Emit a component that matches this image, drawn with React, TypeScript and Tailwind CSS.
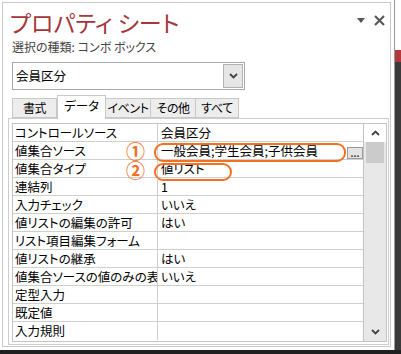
import type { ReactNode } from 'react';

const JP = "font-['Noto_Sans_CJK_JP','Noto_Sans',sans-serif] [font-feature-settings:'palt']";

type Row = { label: string; value: string; extra?: ReactNode };

const rows: Row[] = [
  { label: 'コントロールソース', value: '会員区分' },
  {
    label: '値集合ソース',
    value: '一般会員;学生会員;子供会員',
    extra: (
      <>
        <span className="absolute left-[113px] top-[0px] text-[19px] font-bold leading-[18px] text-[#f36f21]">①</span>
        <span className="pointer-events-none absolute left-[141px] top-[1px] h-[19px] w-[192px] rounded-[9px] border-2 border-[#f36f21]" />
        <span className="absolute left-[334px] top-[5px] flex h-[12px] w-[16px] items-center justify-center border border-[#9a9a9a] bg-[#e4e4e4] text-[9px] font-bold leading-none text-[#333]">
          ...
        </span>
      </>
    ),
  },
  {
    label: '値集合タイプ',
    value: '値リスト',
    extra: (
      <>
        <span className="absolute left-[113px] top-[1px] text-[19px] font-bold leading-[18px] text-[#f36f21]">②</span>
        <span className="pointer-events-none absolute left-[141px] top-[3px] h-[18px] w-[78px] rounded-[9px] border-2 border-[#f36f21]" />
      </>
    ),
  },
  { label: '連結列', value: '1' },
  { label: '入力チェック', value: 'いいえ' },
  { label: '値リストの編集の許可', value: 'はい' },
  { label: 'リスト項目編集フォーム', value: '' },
  { label: '値リストの継承', value: 'はい' },
  { label: '値集合ソースの値のみの表示', value: 'いいえ' },
  { label: '定型入力', value: '' },
  { label: '既定値', value: '' },
  { label: '入力規則', value: '' },
];

const tabs = [
  { name: '書式', w: 'w-[45px]' },
  { name: 'データ', w: 'w-[49px]', active: true },
  { name: 'イベント', w: 'w-[46px]' },
  { name: 'その他', w: 'w-[46px]' },
  { name: 'すべて', w: 'w-[44px]' },
];

function Chevron({ up = false }: { up?: boolean }) {
  return (
    <svg width="9" height="6" viewBox="0 0 9 6" className={up ? 'rotate-180' : ''}>
      <path d="M1 1l3.5 3.5L8 1" fill="none" stroke="#444" strokeWidth="1.8" />
    </svg>
  );
}

export default function App() {
  return (
    <div className={`flex h-[354px] w-[401px] flex-col overflow-hidden bg-[#202020] ${JP}`}>
      <div className="flex h-[350px]">
        {/* panel */}
        <div className="w-[394px] bg-white pl-[2px] pt-[2px]">
          <div className="relative h-[345px] w-[389px] border border-[#c9c9c9]">
            {/* header */}
            <div className="flex h-[32px] items-end justify-between pl-[7px] pr-[5px]">
              <div className="text-[23px] leading-[26px] text-[#a4373a]">プロパティ シート</div>
              <div className="mb-[9px] flex items-center gap-[9px]">
                <svg width="8" height="5" viewBox="0 0 8 5">
                  <path d="M0 0h8L4 5z" fill="#555" />
                </svg>
                <svg width="11" height="11" viewBox="0 0 11 11">
                  <path d="M1 1l9 9M10 1l-9 9" stroke="#555" strokeWidth="2" />
                </svg>
              </div>
            </div>
            <div className="mt-[4px] h-[16px] pl-[9px] text-[12px] leading-[16px] text-[#444]">
              選択の種類: コンボ ボックス
            </div>

            {/* combo */}
            <div className="ml-[9px] mt-[7px] flex h-[28px] w-[233px] items-center border border-[#a9a9a9] bg-white pl-[3px] pr-[1px]">
              <span className="flex-1 text-[12.5px] leading-none text-black">会員区分</span>
              <span className="flex h-[24px] w-[20px] items-center justify-center border border-[#b4b4b4] bg-[#e6e6e6]">
                <Chevron />
              </span>
            </div>

            {/* tabs */}
            <div className="relative z-10 ml-[9px] mt-[5px] flex h-[24px] items-end">
              {tabs.map((t) =>
                t.active ? (
                  <div
                    key={t.name}
                    className={`${t.w} flex h-[24px] items-center justify-center whitespace-nowrap border border-b-0 border-[#c8c8c8] bg-white pb-[3px] text-[12.5px] text-black`}
                  >
                    {t.name}
                  </div>
                ) : (
                  <div
                    key={t.name}
                    className={`${t.w} mb-[1px] ml-[-1px] flex h-[20px] items-center justify-center whitespace-nowrap border border-[#c8c8c8] bg-[#ededed] text-[12px] tracking-[-0.4px] text-black first:ml-0`}
                  >
                    {t.name}
                  </div>
                )
              )}
            </div>

            {/* tab pane */}
            <div className="ml-[5px] mt-[-1px] h-[227px] w-[381px] border border-[#cdcdcd] pl-[3px] pt-[4px]">
              <div className="flex h-[219px] w-[375px] border border-[#c3c3c3]">
                <div className="w-[351px] border-r border-[#c3c3c3]">
                  {rows.map((r, i) => (
                    <div
                      key={r.label}
                      className={`relative flex h-[18px] ${i < rows.length - 1 ? 'border-b border-[#cfcfcf]' : ''}`}
                    >
                      <div className="w-[145px] overflow-hidden whitespace-nowrap border-r border-[#cfcfcf] pl-[2px] text-[12.5px] leading-[17px] text-black">
                        {r.label}
                      </div>
                      <div className="flex-1 whitespace-nowrap pl-[3px] text-[12.5px] leading-[17px] text-black">
                        {r.value}
                      </div>
                      {r.extra}
                    </div>
                  ))}
                </div>
                {/* scrollbar */}
                <div className="flex flex-1 flex-col bg-[#e8e8e8]">
                  <div className="flex h-[18px] items-center justify-center bg-white">
                    <Chevron up />
                  </div>
                  <div className="mx-[2px] h-[21px] bg-[#cbcbcb]" />
                  <div className="flex-1" />
                  <div className="flex h-[18px] items-center justify-center">
                    <Chevron />
                  </div>
                </div>
              </div>
            </div>
          </div>
        </div>
        {/* neighbouring window edge */}
        <div className="flex w-[7px] flex-col border-l border-[#9a9a9a]">
          <div className="h-[50px] bg-white" />
          <div className="h-[12px] bg-[#b3383a]" />
          <div className="flex-1 bg-[#3a3a3a]" />
        </div>
      </div>
    </div>
  );
}
